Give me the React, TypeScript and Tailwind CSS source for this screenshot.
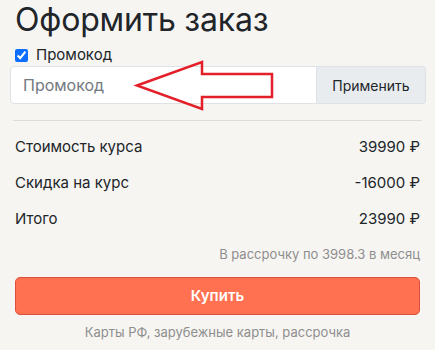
import React from "react";

export default function App() {
  return (
    <div
      className="w-[435px] h-[350px] bg-[#f6f5f2] text-[#212529] relative overflow-hidden"
      style={{ fontFamily: "Inter, 'Noto Sans', sans-serif" }}
    >
      <div className="px-[15px] pt-0">
        <h1 className="text-[32px] leading-[40px] font-normal text-[#212529] tracking-[-0.2px]">Оформить заказ</h1>
        <label className="flex items-center gap-[8px] mt-[6px] h-[18px]">
          <input type="checkbox" defaultChecked className="w-[13px] h-[13px] m-0 accent-[#0d6efd]" />
          <span className="text-[15px] leading-[18px]">Промокод</span>
        </label>
      </div>
      <div className="flex ml-[10px] mr-[9px] mt-[2px] h-[38px]">
        <input
          placeholder="Промокод"
          className="flex-1 min-w-0 h-full bg-white border border-[#dee2e6] rounded-l-[4px] px-[12px] text-[16px] placeholder:text-[#737a81] outline-none"
        />
        <button className="h-full w-[109px] bg-[#e9ecef] border border-l-0 border-[#dee2e6] rounded-r-[4px] text-[14px] text-[#212529]">
          Применить
        </button>
      </div>
      <div className="mx-[13px] mt-[16px] border-t border-[#dcdcdc]" />
      <div className="px-[15px] pt-[16px] flex flex-col gap-[17px] text-[15px] leading-[19px]">
        <div className="flex justify-between">
          <span>Стоимость курса</span>
          <span>39990 ₽</span>
        </div>
        <div className="flex justify-between">
          <span>Скидка на курс</span>
          <span>-16000 ₽</span>
        </div>
        <div className="flex justify-between">
          <span>Итого</span>
          <span>23990 ₽</span>
        </div>
      </div>
      <div className="px-[15px] mt-[17px] text-right text-[13px] leading-[18px] text-[#8e8e8e]">
        В рассрочку по 3998.3 в месяц
      </div>
      <div className="px-[15px] mt-[14px]">
        <button className="w-full h-[38px] bg-[#ff7150] border border-[#dd4f3c] rounded-[5px] text-white text-[15px] font-semibold">
          Купить
        </button>
      </div>
      <div className="mt-[8px] text-center text-[13px] leading-[18px] text-[#8e8e8e]">
        Карты РФ, зарубежные карты, рассрочка
      </div>
      <svg className="absolute left-0 top-0 pointer-events-none" width="435" height="350">
        <polygon
          points="137,85.5 202,62 202,74 272,74 272,97 202,97 202,109"
          fill="none"
          stroke="#e3202a"
          strokeWidth="2.5"
          strokeLinejoin="miter"
        />
      </svg>
    </div>
  );
}
